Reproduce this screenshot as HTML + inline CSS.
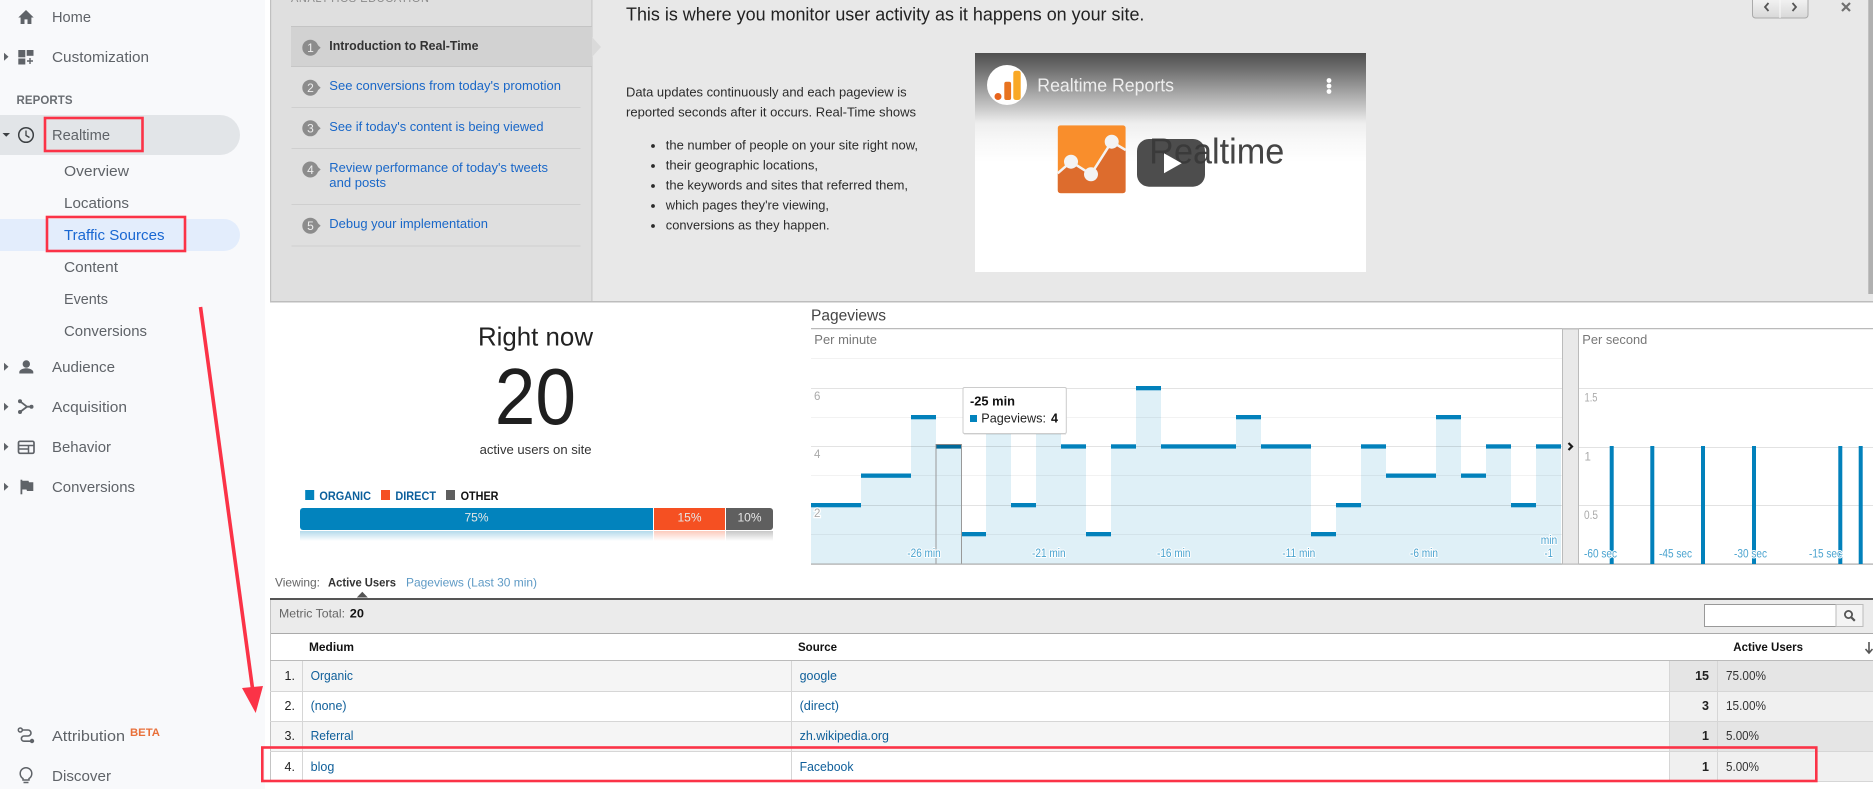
<!DOCTYPE html>
<html lang="en">
<head>
<meta charset="utf-8">
<title>Realtime Traffic Sources</title>
<style>
html,body{margin:0;padding:0;background:#fff;width:1873px;height:789px;overflow:hidden}
svg{display:block}
text{font-family:"Liberation Sans",Arial,sans-serif;white-space:pre}
.n{font-size:14.5px;fill:#5f6368}
.s{font-size:14.5px;fill:#5f6368}
.l{font-size:13px;fill:#1967c8}
.b{font-size:13px;fill:#2b2b2b}
.t{font-size:12.5px;fill:#0f5f9a}
.d{font-size:12.5px;fill:#222}
.h{font-size:12px;fill:#111;font-weight:bold}
.x{font-size:11.5px;fill:#4aa3cf;stroke:#fff;stroke-width:2px;paint-order:stroke;stroke-linejoin:round}
.y{font-size:11.5px;fill:#aaa}
.bar{fill:#dff0f7}
.ln{fill:#0281bb}
</style>
</head>
<body>
<svg xmlns="http://www.w3.org/2000/svg" width="1873" height="789" viewBox="0 0 1873 789">
<rect width="1873" height="789" fill="#fff"/>

<!-- sidebar -->
<rect x="0" y="0" width="265" height="789" fill="#f8f9fb"/>
<path d="M0 115H220a20 20 0 0 1 0 40H0z" fill="#e2e5e8"/>
<path d="M0 219H224a16 16 0 0 1 0 32H0z" fill="#e3edfc"/>

<text class="n" x="52" y="22" textLength="39" lengthAdjust="spacingAndGlyphs">Home</text>
<text class="n" x="52" y="62" textLength="97" lengthAdjust="spacingAndGlyphs">Customization</text>
<text x="16.5" y="104" font-size="11.5" font-weight="bold" fill="#6a6e73" textLength="56" lengthAdjust="spacing">REPORTS</text>
<text class="n" x="52" y="140" textLength="58" lengthAdjust="spacingAndGlyphs">Realtime</text>
<text class="s" x="64" y="176" textLength="65" lengthAdjust="spacingAndGlyphs">Overview</text>
<text class="s" x="64" y="208" textLength="65" lengthAdjust="spacingAndGlyphs">Locations</text>
<text class="s" x="64" y="240" textLength="100.5" lengthAdjust="spacingAndGlyphs" style="fill:#1967d2">Traffic Sources</text>
<text class="s" x="64" y="272" textLength="54" lengthAdjust="spacingAndGlyphs">Content</text>
<text class="s" x="64" y="304" textLength="44" lengthAdjust="spacingAndGlyphs">Events</text>
<text class="s" x="64" y="336" textLength="83" lengthAdjust="spacingAndGlyphs">Conversions</text>
<text class="n" x="52" y="372" textLength="63" lengthAdjust="spacingAndGlyphs">Audience</text>
<text class="n" x="52" y="412" textLength="75" lengthAdjust="spacingAndGlyphs">Acquisition</text>
<text class="n" x="52" y="452" textLength="59" lengthAdjust="spacingAndGlyphs">Behavior</text>
<text class="n" x="52" y="492" textLength="83" lengthAdjust="spacingAndGlyphs">Conversions</text>
<text class="n" x="52" y="741" textLength="73" lengthAdjust="spacingAndGlyphs">Attribution</text>
<text x="130" y="736" font-size="11" font-weight="bold" fill="#e8703a" textLength="30" lengthAdjust="spacingAndGlyphs">BETA</text>
<text class="n" x="52" y="781" textLength="59" lengthAdjust="spacingAndGlyphs">Discover</text>

<!-- sidebar icons -->
<g fill="#5f6368">
<path d="M18.300 17.500L26 10l7.700 7.500h-2.300V24h-3.900v-4.600h-3V24h-3.900v-6.500z"/>
<rect x="18.300" y="50" width="7" height="7.300"/><rect x="26.700" y="50" width="6.800" height="5.800"/><rect x="18.300" y="58.500" width="7" height="6"/>
<path d="M29.300 58h1.400v2.300H33v1.400h-2.300V64h-1.400v-2.300H27v-1.400h2.300z"/>
<path d="M4 52.700l4.500 4-4.500 4z"/>
<path d="M2.500 133h7.500l-3.750 3.700z" fill="#3c4043"/>
<path d="M4 362.700l4.500 4-4.500 4z"/><path d="M4 402.700l4.500 4-4.500 4z"/><path d="M4 442.700l4.500 4-4.500 4z"/><path d="M4 482.700l4.500 4-4.500 4z"/>
<circle cx="26.300" cy="364" r="3.700"/><path d="M19.300 373.500v-1.500c0-2.600 4.600-3.800 7-3.800s7 1.200 7 3.800v1.500z"/>
<circle cx="20" cy="401.300" r="2"/><circle cx="20" cy="412" r="2"/><circle cx="31.500" cy="406.700" r="2"/>
<path d="M20.500 479.700h1.800v14.600h-1.800z"/><path d="M22 480.700h6.500l.5 1.500h4.300v8.800h-6.300l-.5-1.500H22z"/>
<circle cx="32" cy="741" r="2.200"/>
</g>
<circle cx="26" cy="135" r="7.300" fill="none" stroke="#3c4043" stroke-width="1.500"/>
<path d="M26 130.500v5l3.500 2" fill="none" stroke="#3c4043" stroke-width="1.300"/>
<path d="M20 401.300l7 5.400-7 5.300M27 406.700h5" fill="none" stroke="#5f6368" stroke-width="1.800"/>
<rect x="18.500" y="441.300" width="15.500" height="12" rx="1.500" fill="none" stroke="#5f6368" stroke-width="1.700"/>
<path d="M18.500 445.500h15.500M28.500 445.500v7.500M19 449h9.500" fill="none" stroke="#5f6368" stroke-width="1.500"/>
<circle cx="20.300" cy="730" r="2" fill="none" stroke="#5f6368" stroke-width="1.500"/>
<path d="M22.500 730h5.500a3 3 0 0 1 0 6h-4a2.600 2.600 0 0 0 0 5.200h7" fill="none" stroke="#5f6368" stroke-width="1.600"/>
<path d="M23 778.500a5.800 5.800 0 1 1 6 0v1.500h-6z" fill="none" stroke="#5f6368" stroke-width="1.500"/>
<path d="M23.500 782.500h5" stroke="#5f6368" stroke-width="1.500"/>

<!-- gray education panel -->
<rect x="270" y="0" width="1603" height="301" fill="#e8e8e8"/>
<rect x="270" y="0" width="322" height="301" fill="#dfdfdf"/>
<rect x="270" y="301" width="1603" height="1.500" fill="#bdbdbd"/>
<rect x="270" y="0" width="1.200" height="302" fill="#c0c0c0"/>
<rect x="591.300" y="0" width="1.200" height="301" fill="#c8c8c8"/>
<rect x="291" y="26" width="301" height="40.500" fill="#d2d2d2"/>
<rect x="291" y="26" width="301" height="1" fill="#c4c4c4"/>
<rect x="291" y="66" width="301" height="1" fill="#c6c6c6"/>
<path d="M592 37l9 10-9 10z" fill="#dadada"/>
<g fill="#cfcfcf"><rect x="291.500" y="107" width="289" height="1"/><rect x="291.500" y="148" width="289" height="1"/><rect x="291.500" y="204" width="289" height="1"/><rect x="291.500" y="245.500" width="289" height="1"/></g>
<text x="291" y="2" font-size="11" fill="#8a8a8a" textLength="138" lengthAdjust="spacing">ANALYTICS EDUCATION</text>
<g fill="#8c8c8c">
<circle cx="310.300" cy="47.700" r="8"/><path d="M312 39.900l8.700 7.800-8.700 7.800z"/>
<circle cx="310.300" cy="87.700" r="8"/><path d="M312 79.900l8.700 7.800-8.700 7.800z"/>
<circle cx="310.300" cy="128.300" r="8"/><path d="M312 120.500l8.700 7.800-8.700 7.800z"/>
<circle cx="310.300" cy="169.500" r="8"/><path d="M312 161.700l8.700 7.800-8.700 7.800z"/>
<circle cx="310.300" cy="225.700" r="8"/><path d="M312 217.900l8.700 7.800-8.700 7.800z"/>
</g>
<g font-size="12" fill="#eee" text-anchor="middle">
<text x="310.500" y="52">1</text><text x="310.500" y="92">2</text><text x="310.500" y="132.600">3</text><text x="310.500" y="173.800">4</text><text x="310.500" y="230">5</text>
</g>
<text x="329.300" y="50" font-size="13" font-weight="bold" fill="#333" textLength="149.200" lengthAdjust="spacingAndGlyphs">Introduction to Real-Time</text>
<text class="l" x="329.300" y="90" textLength="231.700" lengthAdjust="spacingAndGlyphs">See conversions from today's promotion</text>
<text class="l" x="329.300" y="131" textLength="214.200" lengthAdjust="spacingAndGlyphs">See if today's content is being viewed</text>
<text class="l" x="329.300" y="172" textLength="218.700" lengthAdjust="spacingAndGlyphs">Review performance of today's tweets</text>
<text class="l" x="329.300" y="187" textLength="56.700" lengthAdjust="spacingAndGlyphs">and posts</text>
<text class="l" x="329.300" y="228" textLength="158.700" lengthAdjust="spacingAndGlyphs">Debug your implementation</text>

<text x="626" y="20.700" font-size="18" fill="#222" textLength="518.400" lengthAdjust="spacingAndGlyphs">This is where you monitor user activity as it happens on your site.</text>
<text class="b" x="626" y="96.700" textLength="280.600" lengthAdjust="spacingAndGlyphs">Data updates continuously and each pageview is</text>
<text class="b" x="626" y="116.700" textLength="290" lengthAdjust="spacingAndGlyphs">reported seconds after it occurs. Real-Time shows</text>
<g fill="#2b2b2b"><circle cx="653" cy="146" r="1.900"/><circle cx="653" cy="166" r="1.900"/><circle cx="653" cy="186" r="1.900"/><circle cx="653" cy="206" r="1.900"/><circle cx="653" cy="226" r="1.900"/></g>
<text class="b" x="665.800" y="149.700" textLength="252.200" lengthAdjust="spacingAndGlyphs">the number of people on your site right now,</text>
<text class="b" x="665.800" y="169.700" textLength="152.200" lengthAdjust="spacingAndGlyphs">their geographic locations,</text>
<text class="b" x="665.800" y="189.700" textLength="242.200" lengthAdjust="spacingAndGlyphs">the keywords and sites that referred them,</text>
<text class="b" x="665.800" y="209.700" textLength="163.200" lengthAdjust="spacingAndGlyphs">which pages they're viewing,</text>
<text class="b" x="665.800" y="229.700" textLength="163.800" lengthAdjust="spacingAndGlyphs">conversions as they happen.</text>

<!-- video -->
<defs>
<linearGradient id="vg" x1="0" y1="0" x2="0" y2="1"><stop offset="0" stop-color="#4f4f4f"/><stop offset=".09" stop-color="#777"/><stop offset=".25" stop-color="#c8c8c8"/><stop offset=".32" stop-color="#eee"/><stop offset=".4" stop-color="#f8f8f8"/><stop offset=".5" stop-color="#fff"/><stop offset="1" stop-color="#fff"/></linearGradient>
<linearGradient id="bg" x1="0" y1="0" x2="0" y2="1"><stop offset="0" stop-color="#f4f4f4"/><stop offset="1" stop-color="#d8d8d8"/></linearGradient>
<linearGradient id="r1" x1="0" y1="0" x2="0" y2="1"><stop offset="0" stop-color="#0283bd" stop-opacity=".3"/><stop offset="1" stop-color="#0283bd" stop-opacity="0"/></linearGradient>
<linearGradient id="r2" x1="0" y1="0" x2="0" y2="1"><stop offset="0" stop-color="#f55022" stop-opacity=".3"/><stop offset="1" stop-color="#f55022" stop-opacity="0"/></linearGradient>
<linearGradient id="r3" x1="0" y1="0" x2="0" y2="1"><stop offset="0" stop-color="#5f5f5f" stop-opacity=".35"/><stop offset="1" stop-color="#5f5f5f" stop-opacity="0"/></linearGradient>
<clipPath id="sq"><rect x="1057.700" y="125.300" width="68" height="68" rx="3"/></clipPath>
</defs>
<rect x="975" y="53" width="391" height="219" fill="url(#vg)"/>
<circle cx="1007" cy="85" r="20" fill="#fff"/>
<circle cx="998" cy="96.500" r="3.500" fill="#e8641c"/>
<rect x="1004.300" y="81.700" width="6.800" height="18.300" rx="2" fill="#e8731f"/>
<rect x="1013.300" y="70.700" width="7.400" height="29.300" rx="2.500" fill="#f9a825"/>
<text x="1037.300" y="91.700" font-size="18" fill="#eee" textLength="136.700" lengthAdjust="spacingAndGlyphs">Realtime Reports</text>
<g fill="#fff"><circle cx="1329" cy="80.500" r="2.400"/><circle cx="1329" cy="86" r="2.400"/><circle cx="1329" cy="91.500" r="2.400"/></g>
<g clip-path="url(#sq)">
<rect x="1057.700" y="125.300" width="68" height="68" fill="#f98e2c"/>
<path d="M1057.700 173.300L1071 161.700L1091 174.300L1111.700 141.700L1125.700 150V193.300H1057.700z" fill="#dd6c2d"/>
<path d="M1057.700 173.300L1071 161.700L1091 174.300L1111.700 141.700L1125.700 150" fill="none" stroke="#f3f3f3" stroke-width="2.500"/>
<circle cx="1071" cy="161.700" r="7" fill="#f3f3f3"/><circle cx="1091" cy="174.300" r="7" fill="#f3f3f3"/><circle cx="1111.700" cy="141.700" r="7" fill="#f3f3f3"/>
</g>
<text x="1149.300" y="163.300" font-size="36" fill="#444" textLength="135" lengthAdjust="spacingAndGlyphs">Realtime</text>
<rect x="1137" y="139" width="68" height="47.700" rx="12" fill="#3a3a3a" fill-opacity=".9"/>
<path d="M1164 153.300L1181.700 163.300L1164 173.300z" fill="#fff"/>

<!-- nav buttons top right -->
<path d="M1752.500 -2V15a3 3 0 0 0 3 3H1805a3 3 0 0 0 3-3V-2z" fill="url(#bg)" stroke="#aaa"/>
<rect x="1779.500" y="0" width="1" height="18" fill="#fafafa"/>
<path d="M1768.500 3l-3.500 4 3.500 4M1792.500 3l3.500 4-3.500 4" fill="none" stroke="#555" stroke-width="1.800"/>
<path d="M1842 3l8 8M1850 3l-8 8" stroke="#707070" stroke-width="2.200"/>
<rect x="1868.300" y="0" width="4.700" height="294" fill="#b0b0b0"/>

<!-- right now -->
<text x="478" y="345.300" font-size="26" fill="#222" textLength="115" lengthAdjust="spacingAndGlyphs">Right now</text>
<text x="494.800" y="424" font-size="80" fill="#1f1f1f" textLength="81.200" lengthAdjust="spacingAndGlyphs">20</text>
<text x="479.600" y="454" font-size="13" fill="#333" textLength="112" lengthAdjust="spacingAndGlyphs">active users on site</text>

<rect x="305.200" y="490" width="9" height="10" fill="#0283bd"/>
<text class="h" x="319.400" y="500" textLength="51.600" lengthAdjust="spacingAndGlyphs" style="fill:#0b5f9c">ORGANIC</text>
<rect x="381" y="490" width="9" height="10" fill="#f55022"/>
<text class="h" x="395.400" y="500" textLength="40.600" lengthAdjust="spacingAndGlyphs" style="fill:#0b5f9c">DIRECT</text>
<rect x="446" y="490" width="9" height="10" fill="#5f5f5f"/>
<text class="h" x="460.600" y="500" textLength="37.900" lengthAdjust="spacingAndGlyphs">OTHER</text>

<path d="M303 508H653V530H303a3 3 0 0 1-3-3V511a3 3 0 0 1 3-3z" fill="#0283bd"/>
<rect x="654" y="508" width="71" height="22" fill="#f55022"/>
<path d="M726 508H770a3 3 0 0 1 3 3V527a3 3 0 0 1-3 3H726z" fill="#5f5f5f"/>
<rect x="300" y="531" width="353" height="10" fill="url(#r1)"/>
<rect x="654" y="531" width="71" height="10" fill="url(#r2)"/>
<rect x="726" y="531" width="47" height="10" fill="url(#r3)"/>
<g font-size="12" fill="#e6e6e6" text-anchor="middle">
<text x="476.500" y="521.700">75%</text><text x="689.500" y="521.700">15%</text><text x="749.500" y="521.700">10%</text>
</g>

<text x="275" y="586.700" font-size="12" fill="#666" textLength="45" lengthAdjust="spacingAndGlyphs">Viewing:</text>
<text x="328" y="586.700" font-size="12" font-weight="bold" fill="#333" textLength="68" lengthAdjust="spacingAndGlyphs">Active Users</text>
<text x="406" y="586.700" font-size="12" fill="#5e9ac5" textLength="131" lengthAdjust="spacingAndGlyphs">Pageviews (Last 30 min)</text>
<path d="M356.800 597.500L362.300 591.700L367.800 597.500z" fill="#555"/>

<!-- chart: per minute -->
<text x="811" y="320.700" font-size="15.500" fill="#444" textLength="75" lengthAdjust="spacingAndGlyphs">Pageviews</text>
<rect x="811" y="328.200" width="1062" height="1" fill="#aaa"/>
<text x="814.300" y="344" font-size="13" fill="#777" textLength="62.700" lengthAdjust="spacingAndGlyphs">Per minute</text>

<g>
<rect class="bar" x="811" y="505" width="50" height="59"/>
<rect class="bar" x="861" y="476" width="50" height="88"/>
<rect class="bar" x="911" y="417" width="25" height="147"/>
<rect class="bar" x="936" y="446" width="25" height="118"/>
<rect class="bar" x="961" y="534" width="25" height="30"/>
<rect class="bar" x="986" y="417" width="25" height="147"/>
<rect class="bar" x="1011" y="505" width="25" height="59"/>
<rect class="bar" x="1036" y="417" width="25" height="147"/>
<rect class="bar" x="1061" y="446" width="25" height="118"/>
<rect class="bar" x="1086" y="534" width="25" height="30"/>
<rect class="bar" x="1111" y="446" width="25" height="118"/>
<rect class="bar" x="1136" y="388" width="25" height="176"/>
<rect class="bar" x="1161" y="446" width="75" height="118"/>
<rect class="bar" x="1236" y="417" width="25" height="147"/>
<rect class="bar" x="1261" y="446" width="50" height="118"/>
<rect class="bar" x="1311" y="534" width="25" height="30"/>
<rect class="bar" x="1336" y="505" width="25" height="59"/>
<rect class="bar" x="1361" y="446" width="25" height="118"/>
<rect class="bar" x="1386" y="476" width="50" height="88"/>
<rect class="bar" x="1436" y="417" width="25" height="147"/>
<rect class="bar" x="1461" y="476" width="25" height="88"/>
<rect class="bar" x="1486" y="446" width="25" height="118"/>
<rect class="bar" x="1511" y="505" width="25" height="59"/>
<rect class="bar" x="1536" y="446" width="25" height="118"/>
</g>
<g>
<rect x="811" y="358" width="751" height="1" fill="#000" fill-opacity=".05"/>
<rect x="811" y="388" width="751" height="1" fill="#000" fill-opacity=".11"/>
<rect x="811" y="417" width="751" height="1" fill="#000" fill-opacity=".05"/>
<rect x="811" y="446" width="751" height="1" fill="#000" fill-opacity=".11"/>
<rect x="811" y="475" width="751" height="1" fill="#000" fill-opacity=".05"/>
<rect x="811" y="505" width="751" height="1" fill="#000" fill-opacity=".11"/>
<rect x="811" y="534" width="751" height="1" fill="#000" fill-opacity=".05"/>
</g>
<g>
<rect class="ln" x="811" y="503" width="50" height="4.300"/>
<rect class="ln" x="861" y="473.500" width="50" height="4.300"/>
<rect class="ln" x="911" y="415" width="25" height="4.300"/>
<rect class="ln" x="936" y="444.300" width="25" height="4.300"/>
<rect class="ln" x="961" y="532" width="25" height="4.300"/>
<rect class="ln" x="1011" y="503" width="25" height="4.300"/>
<rect class="ln" x="1061" y="444.300" width="25" height="4.300"/>
<rect class="ln" x="1086" y="532" width="25" height="4.300"/>
<rect class="ln" x="1111" y="444.300" width="25" height="4.300"/>
<rect class="ln" x="1136" y="386" width="25" height="4.300"/>
<rect class="ln" x="1161" y="444.300" width="75" height="4.300"/>
<rect class="ln" x="1236" y="415" width="25" height="4.300"/>
<rect class="ln" x="1261" y="444.300" width="50" height="4.300"/>
<rect class="ln" x="1311" y="532" width="25" height="4.300"/>
<rect class="ln" x="1336" y="503" width="25" height="4.300"/>
<rect class="ln" x="1361" y="444.300" width="25" height="4.300"/>
<rect class="ln" x="1386" y="473.500" width="50" height="4.300"/>
<rect class="ln" x="1436" y="415" width="25" height="4.300"/>
<rect class="ln" x="1461" y="473.500" width="25" height="4.300"/>
<rect class="ln" x="1486" y="444.300" width="25" height="4.300"/>
<rect class="ln" x="1511" y="503" width="25" height="4.300"/>
<rect class="ln" x="1536" y="444.300" width="25" height="4.300"/>
</g>
<rect x="936" y="444.500" width="25.500" height="119.500" fill="none" stroke="#999" stroke-width="1"/>
<rect x="936" y="444.300" width="25" height="4.300" fill="#000" fill-opacity=".18"/>
<rect x="811" y="563.500" width="1062" height="1.200" fill="#aaa"/>

<text class="y" x="814" y="400">6</text>
<text class="y" x="814" y="458">4</text>
<text class="y" x="814" y="517" style="stroke:#fff;stroke-width:2.500px;paint-order:stroke">2</text>
<text class="x" x="907.300" y="557" textLength="33.400" lengthAdjust="spacingAndGlyphs">-26 min</text>
<text class="x" x="1032" y="557" textLength="33.600" lengthAdjust="spacingAndGlyphs">-21 min</text>
<text class="x" x="1157" y="557" textLength="33.500" lengthAdjust="spacingAndGlyphs">-16 min</text>
<text class="x" x="1282.300" y="557" textLength="33" lengthAdjust="spacingAndGlyphs">-11 min</text>
<text class="x" x="1410" y="557" textLength="28" lengthAdjust="spacingAndGlyphs">-6 min</text>
<text class="x" x="1540.700" y="544" textLength="16.500" lengthAdjust="spacingAndGlyphs">min</text>
<text class="x" x="1544.500" y="557" textLength="8.500" lengthAdjust="spacingAndGlyphs">-1</text>

<!-- splitter -->
<rect x="1562.500" y="329" width="16" height="235" fill="#e9e9e9" stroke="#bbb" stroke-width="1"/>
<path d="M1568.500 443l3.500 3.500-3.500 3.500" fill="none" stroke="#1a1a1a" stroke-width="2.200"/>

<!-- tooltip -->
<rect x="963" y="387.500" width="103.300" height="46" rx="1.500" fill="#fff" stroke="#ccc"/>
<rect x="964" y="434" width="102" height="1" fill="#000" fill-opacity=".08"/>
<text x="970" y="405.700" font-size="13" font-weight="bold" fill="#111" textLength="45" lengthAdjust="spacingAndGlyphs">-25 min</text>
<rect x="970" y="415" width="7" height="7" fill="#0283bd"/>
<text x="981.300" y="422.700" font-size="13" fill="#222" textLength="64.700" lengthAdjust="spacingAndGlyphs">Pageviews:</text>
<text x="1051" y="422.700" font-size="13" font-weight="bold" fill="#111" textLength="7" lengthAdjust="spacingAndGlyphs">4</text>

<!-- chart: per second -->
<text x="1582.300" y="344" font-size="13" fill="#777" textLength="65" lengthAdjust="spacingAndGlyphs">Per second</text>
<rect x="1579" y="388" width="294" height="1" fill="#e2e2e2"/>
<rect x="1579" y="447" width="294" height="1" fill="#e2e2e2"/>
<rect x="1579" y="505" width="294" height="1" fill="#e2e2e2"/>
<text class="y" x="1584.500" y="401.700" textLength="13" lengthAdjust="spacingAndGlyphs">1.5</text>
<text class="y" x="1584.500" y="460.700">1</text>
<text class="y" x="1584" y="519" textLength="14" lengthAdjust="spacingAndGlyphs">0.5</text>
<g>
<rect class="ln" x="1609.700" y="446" width="4" height="118"/>
<rect class="ln" x="1650.300" y="446" width="4" height="118"/>
<rect class="ln" x="1701" y="446" width="4" height="118"/>
<rect class="ln" x="1752" y="446" width="4" height="118"/>
<rect class="ln" x="1838.300" y="446" width="4" height="118"/>
<rect class="ln" x="1858.700" y="446" width="4" height="118"/>
</g>
<text class="x" x="1584" y="557.700" textLength="33" lengthAdjust="spacingAndGlyphs">-60 sec</text>
<text class="x" x="1659" y="557.700" textLength="33" lengthAdjust="spacingAndGlyphs">-45 sec</text>
<text class="x" x="1734" y="557.700" textLength="33" lengthAdjust="spacingAndGlyphs">-30 sec</text>
<text class="x" x="1809" y="557.700" textLength="33" lengthAdjust="spacingAndGlyphs">-15 sec</text>

<!-- table -->
<rect x="270" y="598" width="1603" height="2" fill="#555"/>
<rect x="270" y="600" width="1603" height="33" fill="#ebebeb"/>
<rect x="270" y="633" width="1603" height="1" fill="#aaa"/>
<rect x="270" y="600" width="1" height="181" fill="#c4c4c4"/>
<text x="279" y="617.300" font-size="12" fill="#666" textLength="66" lengthAdjust="spacingAndGlyphs">Metric Total:</text>
<text x="349.800" y="617.300" font-size="12" font-weight="bold" fill="#111" textLength="14.200" lengthAdjust="spacingAndGlyphs">20</text>
<rect x="1704.500" y="604.500" width="131.500" height="22" fill="#fff" stroke="#999"/>
<rect x="1836" y="604.500" width="27" height="22" fill="#f4f4f4" stroke="#bbb"/>
<circle cx="1848.500" cy="614.500" r="3.600" fill="none" stroke="#555" stroke-width="1.800"/>
<path d="M1851 617l3.800 3.800" stroke="#555" stroke-width="2.200"/>

<text class="h" x="309" y="651" textLength="45" lengthAdjust="spacingAndGlyphs">Medium</text>
<text class="h" x="798" y="651" textLength="39" lengthAdjust="spacingAndGlyphs">Source</text>
<text class="h" x="1733.300" y="651" textLength="69.700" lengthAdjust="spacingAndGlyphs">Active Users</text>
<path d="M1869 642v11M1865.500 649l3.500 4 3.500-4" fill="none" stroke="#555" stroke-width="1.600"/>
<rect x="270" y="660" width="1603" height="1" fill="#bbb"/>

<rect x="271" y="661" width="1602" height="30" fill="#f5f5f5"/>
<rect x="271" y="692" width="1602" height="29" fill="#fff"/>
<rect x="271" y="722" width="1602" height="29" fill="#f5f5f5"/>
<rect x="271" y="752" width="1602" height="29" fill="#fff"/>
<rect x="1669" y="661" width="204" height="30" fill="#e5e5e5"/>
<rect x="1669" y="692" width="204" height="29" fill="#f0f0f0"/>
<rect x="1669" y="722" width="204" height="29" fill="#e5e5e5"/>
<rect x="1669" y="752" width="204" height="29" fill="#f0f0f0"/>
<g fill="#d6d6d6">
<rect x="270" y="691" width="1603" height="1"/><rect x="270" y="721" width="1603" height="1"/><rect x="270" y="751" width="1603" height="1"/><rect x="270" y="781" width="1603" height="1"/>
<rect x="302" y="661" width="1" height="120"/><rect x="791" y="661" width="1" height="120"/><rect x="1669" y="661" width="1" height="120"/><rect x="1717" y="661" width="1" height="120"/>
</g>

<g>
<text class="d" x="284.500" y="680">1.</text><text class="d" x="284.500" y="710">2.</text><text class="d" x="284.500" y="740">3.</text><text class="d" x="284.500" y="771">4.</text>
<text class="t" x="310.600" y="680" textLength="42.400" lengthAdjust="spacingAndGlyphs">Organic</text>
<text class="t" x="310.600" y="710" textLength="35.900" lengthAdjust="spacingAndGlyphs">(none)</text>
<text class="t" x="310.600" y="740" textLength="42.900" lengthAdjust="spacingAndGlyphs">Referral</text>
<text class="t" x="310.600" y="771" textLength="23.700" lengthAdjust="spacingAndGlyphs">blog</text>
<text class="t" x="799.600" y="680" textLength="37.400" lengthAdjust="spacingAndGlyphs">google</text>
<text class="t" x="799.600" y="710" textLength="39.400" lengthAdjust="spacingAndGlyphs">(direct)</text>
<text class="t" x="799.600" y="740" textLength="89.400" lengthAdjust="spacingAndGlyphs">zh.wikipedia.org</text>
<text class="t" x="799.600" y="771" textLength="53.900" lengthAdjust="spacingAndGlyphs">Facebook</text>
<g font-size="12.500" font-weight="bold" fill="#222" text-anchor="end">
<text x="1709" y="680">15</text><text x="1709" y="710">3</text><text x="1709" y="740">1</text><text x="1709" y="771">1</text>
</g>
<text class="d" x="1726" y="680" textLength="40" lengthAdjust="spacingAndGlyphs" style="fill:#333">75.00%</text>
<text class="d" x="1726" y="710" textLength="40" lengthAdjust="spacingAndGlyphs" style="fill:#333">15.00%</text>
<text class="d" x="1726" y="740" textLength="33" lengthAdjust="spacingAndGlyphs" style="fill:#333">5.00%</text>
<text class="d" x="1726" y="771" textLength="33" lengthAdjust="spacingAndGlyphs" style="fill:#333">5.00%</text>
</g>

<!-- red annotations -->
<g fill="none" stroke="#fb3347" stroke-width="2.600">
<rect x="45" y="118" width="97.500" height="33"/>
<rect x="47" y="217" width="138" height="34"/>
<rect x="262.300" y="747.500" width="1554" height="33.500"/>
</g>
<path d="M200.500 307L253 692" stroke="#fb3347" stroke-width="3.600" fill="none"/>
<path d="M242 688L263 686L255.700 713z" fill="#fb3347"/>
</svg>
</body>
</html>
